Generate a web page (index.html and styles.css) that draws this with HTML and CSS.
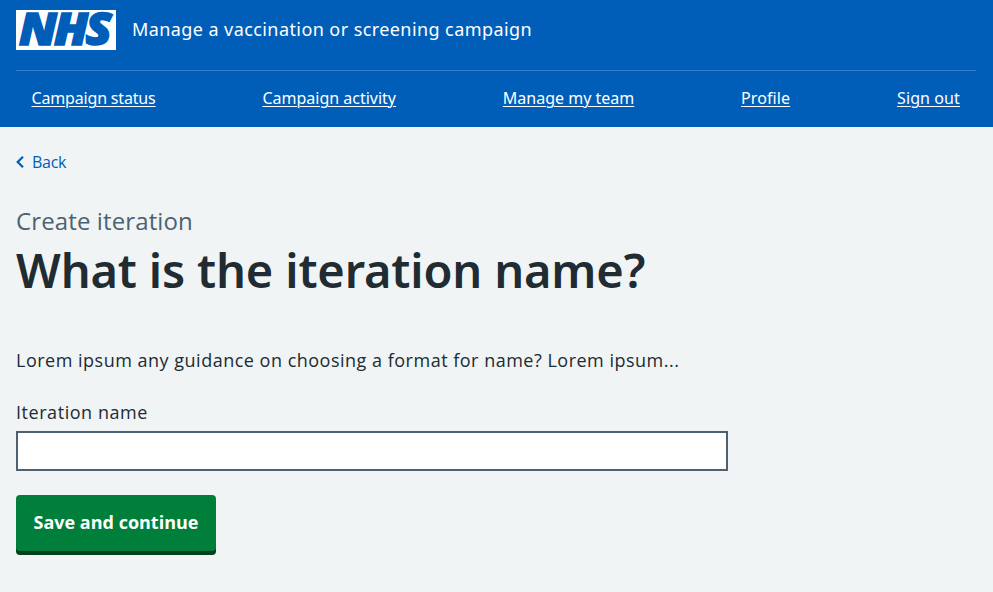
FILE: index.html
```html
<!DOCTYPE html>
<html lang="en">
<head>
<meta charset="utf-8">
<title>What is the iteration name?</title>
<link rel="stylesheet" href="styles.css">
</head>
<body>
<header class="header">
  <div class="header-top">
    <svg class="logo" viewBox="0 0 100 40" width="100" height="40" role="img" aria-label="NHS">
      <rect width="100" height="40" fill="#fff"/>
      <text class="logo-text" x="3" y="35.3" textLength="90" lengthAdjust="spacingAndGlyphs">NHS</text>
    </svg>
    <span class="service">Manage a vaccination or screening campaign</span>
  </div>
  <nav class="nav">
    <a class="nav-status" href="#">Campaign status</a>
    <a class="nav-activity" href="#">Campaign activity</a>
    <a class="nav-team" href="#">Manage my team</a>
    <a class="nav-profile" href="#">Profile</a>
    <a class="nav-signout" href="#">Sign out</a>
  </nav>
</header>
<main class="main">
  <a class="back" href="#"><svg class="chevron" viewBox="0 0 8 12" width="8" height="12" aria-hidden="true"><path d="M7 .8 1.7 6 7 11.2" fill="none" stroke="currentColor" stroke-width="2.2"/></svg><span class="back-text">Back</span></a>
  <div class="caption"><span>Create iteration</span></div>
  <h1 class="title"><span>What is the iteration name?</span></h1>
  <p class="guidance"><span>Lorem ipsum any guidance on choosing a format for name? Lorem ipsum...</span></p>
  <label class="label" for="name"><span>Iteration name</span></label>
  <input class="input" id="name" type="text">
  <button class="button" type="button">Save and continue</button>
</main>
</body>
</html>
```
FILE: styles.css
```css
* { box-sizing: border-box; }
body {
  margin: 0;
  min-height: 592px;
  background: #f0f4f5;
  color: #212b32;
  font-family: "Open Sans", "Noto Sans", sans-serif;
  font-size: 18px;
}
.header { height: 127px; padding: 10px 17px 0 16px; background: #005eb8; color: #fff; font-family: "Noto Sans", sans-serif; }
.header-top { display: flex; align-items: center; height: 40px; gap: 16px; }
.logo { display: block; flex: none; overflow: visible; }
.logo-text {
  font: italic 800 43.5px "Open Sans", sans-serif;
  letter-spacing: -2.5px;
  fill: #005eb8;
  stroke: #005eb8;
  stroke-width: 1.6px;
}
.service { margin-top: -2px; line-height: 28px; letter-spacing: 0.42px; white-space: nowrap; }
.nav {
  display: flex;
  justify-content: space-between;
  margin-top: 20px;
  padding: 15px 16px 0 15.5px;
  border-top: 1px solid #337ec6;
  font-size: 16px;
  line-height: 24px;
}
.nav a { color: #fff; white-space: nowrap; text-underline-offset: 2px; text-decoration-thickness: 1px; }
.nav-status { letter-spacing: -0.17px; }
.nav-profile, .nav-signout { letter-spacing: 0.1px; }
.main { padding: 23px 16px 0; }
.back { display: flex; align-items: center; gap: 8px; height: 24px; color: #005eb8; font-size: 16px; line-height: 24px; letter-spacing: -0.3px; text-decoration: none; }
.caption { margin-top: 31px; color: #4c6272; font-size: 24px; line-height: 32px; letter-spacing: 0.12px; }
.title { margin: 6px 0 0; font-family: "Noto Sans", sans-serif; font-size: 47px; line-height: 54px; font-weight: 600; letter-spacing: -0.15px; }
.guidance { margin: 49px 0 0; line-height: 28px; letter-spacing: 0.5px; }
.label { display: block; margin-top: 24px; line-height: 28px; letter-spacing: 0.55px; }
.input { display: block; width: 712px; height: 40px; margin-top: 5px; border: 2px solid #4c6272; border-radius: 0; background: #fff; }
.button {
  display: block;
  width: 200px;
  height: 56px;
  margin-top: 24px;
  padding: 0 0 2px;
  border: 0;
  border-radius: 4px;
  background: #007f3b;
  box-shadow: 0 4px 0 #00401e;
  color: #fff;
  font: 700 18px/28px "Open Sans", sans-serif;
}
```
